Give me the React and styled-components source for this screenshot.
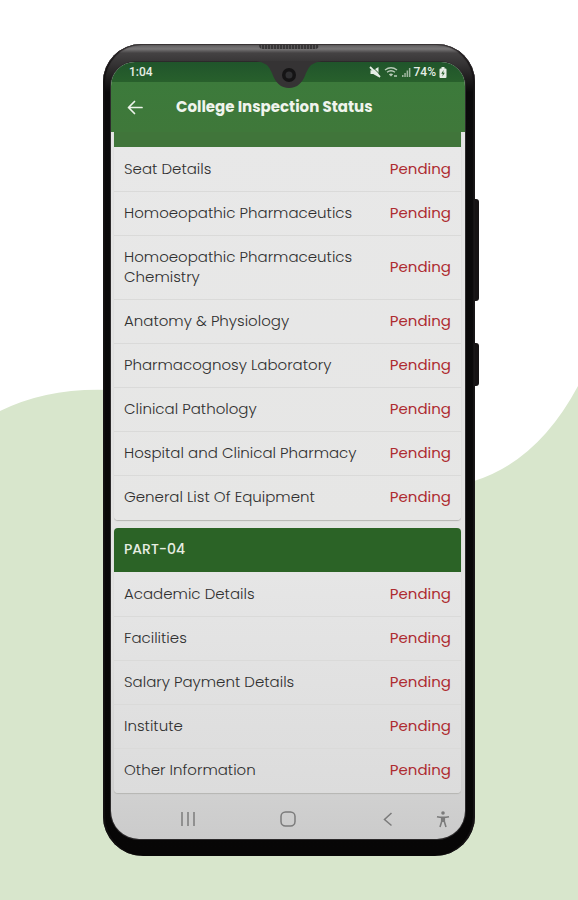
import React from "react";
import styled, { createGlobalStyle } from "styled-components";

const GlobalStyle = createGlobalStyle`
  *, *::before, *::after { box-sizing: border-box; }
  body {
    margin: 0;
    background: #fff;
    font-family: Poppins, Inter, "Open Sans", sans-serif;
  }
  button { font: inherit; }
`;

const Page = styled.main`
  position: relative;
  min-height: 100vh;
  padding: 44px 103px;
  display: flex;
  justify-content: center;
  align-items: flex-start;
`;

const Backdrop = styled.svg`
  position: absolute;
  inset: 0;
  width: 100%;
  height: 100%;
`;

const Phone = styled.div`
  position: relative;
  width: 100%;
  max-width: 480px;
  padding: 18px 10px 17px 8px;
  border-radius: 38px 38px 40px 40px;
  background: linear-gradient(#5c5a5b 0, #777576 5px, #444243 9px, #353334 20px, #0b0a0b 48px, #070606 100%);
  box-shadow: inset 0 1px 1px #373234, inset 2px 0 1px #121011, inset -2px 0 1px #171416;
`;

const SideKey = styled.span`
  position: absolute;
  left: 100%;
  top: ${(p) => p.$top}px;
  width: 4px;
  height: ${(p) => p.$length}px;
  border-radius: 0 3px 3px 0;
  background: #161314;
`;

const Speaker = styled.span`
  position: absolute;
  top: 1px;
  left: 50%;
  width: 60px;
  height: 4px;
  transform: translateX(-50%);
  border-radius: 0 0 4px 4px;
  background: repeating-linear-gradient(90deg, #383637 0 2px, #5a5859 2px 3px);
`;

const Notch = styled.svg`
  position: absolute;
  top: 17px;
  left: 50%;
  width: 66px;
  height: 28px;
  transform: translateX(-50%);
`;

const Screen = styled.div`
  overflow: hidden;
  border-radius: 24px 24px 28px 28px;
  background: linear-gradient(#e6e6e6 0, #e3e3e2 75%, #cbcbcb 100%);
  box-shadow: 0 0 0 1px #2c2a2b;
`;

const StatusBar = styled.div`
  display: flex;
  justify-content: space-between;
  align-items: center;
  height: 20px;
  padding: 0 18px;
  color: #e6eee6;
  background: linear-gradient(#20552b, #28602c);
  font: 500 12px/20px Roboto, sans-serif;
`;

const StatusIcons = styled.div`
  display: flex;
  align-items: center;
  gap: 3px;
`;

const AppBar = styled.header`
  display: flex;
  align-items: center;
  gap: 31px;
  height: 50px;
  padding: 0 14px;
  background: linear-gradient(#3c7a3b, #3f783a);
`;

const BackButton = styled.button`
  display: flex;
  width: 20px;
  padding: 0;
  border: 0;
  color: #edf3ea;
  background: none;
`;

const Title = styled.h1`
  margin: 0;
  color: #f0f4ed;
  font-size: 15px;
  font-weight: 700;
  line-height: 20px;
  white-space: nowrap;
`;

const Sections = styled.div`
  display: grid;
  gap: 8px;
  padding: 0 4px 1px 3px;
`;

const Card = styled.section`
  overflow: hidden;
  padding-bottom: 1px;
  border-radius: ${(p) => (p.$joined ? "0 0 4px 4px" : "4px")};
  background: linear-gradient(#e8e8e8, ${(p) => (p.$joined ? "#e6e6e5" : "#dcdcdc")});
  box-shadow: 0 1px 1px #b5b5b2;
`;

const HeaderTail = styled.div`
  height: 15px;
  background: #40753a;
`;

const PartTitle = styled.h2`
  display: flex;
  align-items: center;
  height: 44px;
  margin: 0;
  padding: 0 10px 2px;
  color: #e6ede2;
  background: #2b6326;
  font-size: 14px;
  font-weight: 500;
`;

const List = styled.ul`
  margin: 0;
  padding: 0;
  list-style: none;
`;

const Row = styled.li`
  display: flex;
  justify-content: space-between;
  align-items: center;
  gap: 20px;
  min-height: 44px;
  padding: 11px 10px 12px;
  color: #303030;
  font-size: 15px;
  font-weight: 300;
  line-height: 20px;

  & + & { border-top: 1px solid #dadad9; }
`;

const Status = styled.strong`
  color: #ae2c31;
  font-weight: 400;
`;

const NavBar = styled.nav`
  display: grid;
  grid-template-columns: 1fr auto 1fr;
  column-gap: 82px;
  align-items: center;
  height: 45px;
  padding-top: 4px;
`;

const NavButton = styled.button`
  display: flex;
  justify-self: end;
  padding: 0;
  border: 0;
  color: #7b7b7b;
  background: none;
`;

const NavPair = styled.div`
  display: flex;
  gap: 38px;
`;

const partThree = [
  "Seat Details",
  "Homoeopathic Pharmaceutics",
  "Homoeopathic Pharmaceutics Chemistry",
  "Anatomy & Physiology",
  "Pharmacognosy Laboratory",
  "Clinical Pathology",
  "Hospital and Clinical Pharmacy",
  "General List Of Equipment",
];

const partFour = [
  "Academic Details",
  "Facilities",
  "Salary Payment Details",
  "Institute",
  "Other Information",
];

function StatusList({ items }) {
  return (
    <List>
      {items.map((name) => (
        <Row key={name}>
          <span>{name}</span>
          <Status>Pending</Status>
        </Row>
      ))}
    </List>
  );
}

function StatusGlyphs() {
  return (
    <StatusIcons>
      <svg width="12" height="12" viewBox="0 0 12 12" fill="#e6eee6" aria-label="Muted">
        <path d="M1.500 4.200h2.700L9.500 1v10L4.200 8H1.500z" />
        <path d="M3 0.500l9 9" stroke="#24592b" strokeWidth="1" />
        <path d="M1 1l10 10" stroke="#e6eee6" strokeWidth="1.800" />
      </svg>
      <svg width="14" height="12" viewBox="0 0 14 12" fill="none" stroke="#b9cbb9" strokeWidth="1.400" aria-label="Wi-Fi">
        <path d="M1 4q6-4.500 12 0M3 6.300q4-3 8 0" />
        <path d="M4.800 8.200q2.200-1.500 4.400 0L7 10.500z" fill="#b9cbb9" stroke="none" />
        <path d="M10 10h3" />
      </svg>
      <svg width="10" height="12" viewBox="0 0 10 12" fill="#9eb69f" aria-label="Signal">
        <path d="M1 9h1.500v2H1zM3.300 7h1.500v4H3.300zM5.600 4.500h1.500V11H5.600zM7.900 2h1.500v9H7.900z" />
      </svg>
      <span>74%</span>
      <svg width="8" height="11" viewBox="0 0 8 11" aria-label="Battery">
        <path d="M2.500 0h3v1.500h1q1 0 1 1V10q0 1-1 1h-5q-1 0-1-1V2.500q0-1 1-1h1z" fill="#e6eee6" />
        <path d="M4.600 3L2.200 6.800h1.600L3.400 9.500l2.400-3.800H4.200z" fill="#28602c" />
      </svg>
    </StatusIcons>
  );
}

export default function App() {
  return (
    <>
      <GlobalStyle />
      <Page>
        <Backdrop viewBox="0 0 578 900" preserveAspectRatio="none" aria-hidden="true">
          <path d="M0 411Q48 387 112 390L474 481Q538 461 578 386V900H0z" fill="#d8e6cc" />
        </Backdrop>
        <Phone>
          <SideKey $top={155} $length={102} />
          <SideKey $top={299} $length={43} />
          <Speaker />
          <Screen>
            <StatusBar>
              <span>1:04</span>
              <StatusGlyphs />
            </StatusBar>
            <AppBar>
              <BackButton aria-label="Back">
                <svg width="20" height="20" viewBox="0 0 20 20" fill="none" stroke="currentColor" strokeWidth="1.700" strokeLinecap="round" strokeLinejoin="round">
                  <path d="M17 10.500H3.500M9.500 4.500l-6 6 6 6" />
                </svg>
              </BackButton>
              <Title>College Inspection Status</Title>
            </AppBar>
            <Sections>
              <Card $joined>
                <HeaderTail />
                <StatusList items={partThree} />
              </Card>
              <Card>
                <PartTitle>PART-04</PartTitle>
                <StatusList items={partFour} />
              </Card>
            </Sections>
            <NavBar aria-label="System navigation">
              <NavButton aria-label="Recent apps">
                <svg width="18" height="18" viewBox="0 0 18 18" fill="none" stroke="currentColor" strokeWidth="1.500">
                  <path d="M3 2v14M9 2v14M15 2v14" />
                </svg>
              </NavButton>
              <NavButton aria-label="Home">
                <svg width="18" height="18" viewBox="0 0 18 18" fill="none" stroke="currentColor" strokeWidth="1.500">
                  <rect x="2" y="2" width="14" height="14" rx="4.500" />
                </svg>
              </NavButton>
              <NavPair>
                <NavButton aria-label="Back">
                  <svg width="18" height="18" viewBox="0 0 18 18" fill="none" stroke="currentColor" strokeWidth="1.500">
                    <path d="M12.500 3l-7 6.500 7 6" />
                  </svg>
                </NavButton>
                <NavButton aria-label="Accessibility">
                  <svg width="16" height="18" viewBox="0 0 16 18" fill="none" stroke="currentColor" strokeWidth="1.600">
                    <circle cx="8" cy="3" r="1.800" fill="currentColor" stroke="none" />
                    <path d="M2 6.800q6 1.200 12 0" />
                    <path d="M6.700 7v4.500L5 17M9.300 7v4.500L11 17M6.300 11.300h3.400" />
                    <path d="M8 7v4" strokeWidth="2" />
                  </svg>
                </NavButton>
              </NavPair>
            </NavBar>
          </Screen>
          <Notch viewBox="0 0 66 28" aria-hidden="true">
            <path d="M0 0Q12 1 16 12Q21 27 33 27Q45 27 50 12Q54 1 66 0z" fill="#353334" />
            <circle cx="33" cy="14" r="7" fill="#151415" />
            <circle cx="33" cy="14" r="3.500" fill="#303032" />
          </Notch>
        </Phone>
      </Page>
    </>
  );
}
